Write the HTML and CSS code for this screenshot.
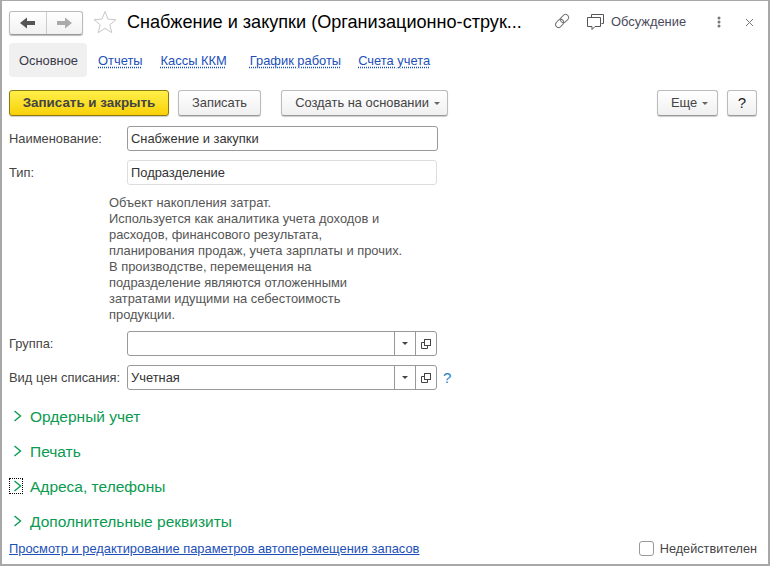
FILE: index.html
```html
<!DOCTYPE html>
<html lang="ru">
<head>
<meta charset="utf-8">
<title>Снабжение и закупки</title>
<link rel="stylesheet" href="styles.css">
</head>
<body>
<div class="window">
  <header class="head">
    <div class="nav">
      <button class="nav-btn"><svg width="16" height="12" viewBox="0 0 16 12"><path d="M0 6 7 .5V4h8v4H7v3.500z" fill="#555"/></svg></button>
      <button class="nav-btn"><svg width="16" height="12" viewBox="0 0 16 12"><path d="M16 6 9 .5V4H1v4h8v3.500z" fill="#aaa"/></svg></button>
    </div>
    <svg class="star" width="24" height="24" viewBox="0 0 24 24"><path d="M12 1.500l3 7.600 8 .6-6.200 5.100 2 7.900L12 18.400 5.200 22.700l2-7.900L1 9.700l8-.6z" fill="#fff" stroke="#c8c8c8"/></svg>
    <h1 class="title">Снабжение и закупки (Организационно-струк...</h1>
    <svg class="link-ic" width="18" height="18" viewBox="0 0 18 18" fill="none" stroke="#777"><rect x="-1.500" y="-3" width="9" height="6" rx="3" transform="translate(5.500 12.500) rotate(-45)"/><rect x="-7.500" y="-3" width="9" height="6" rx="3" transform="translate(12.500 5.500) rotate(-45) translate(3 0)"/></svg>
    <svg class="chat-ic" width="17" height="16" viewBox="0 0 17 16" fill="none" stroke="#555"><path d="M4.500 3.500V.5h12v9h-2"/><path d="M.5 3.500h13v9H8l-3 3v-3H.5z" fill="#fff"/></svg>
    <span class="discuss">Обсуждение</span>
    <svg class="dots" width="4" height="12" viewBox="0 0 4 12" fill="#777"><circle cx="2" cy="2" r="1.500"/><circle cx="2" cy="6" r="1.500"/><circle cx="2" cy="10" r="1.500"/></svg>
    <svg class="close" width="9" height="9" viewBox="0 0 9 9" stroke="#777"><path d="M1 1l7 7M8 1L1 8"/></svg>
  </header>

  <nav class="tabs">
    <span class="tab tab-active">Основное</span>
    <a class="tab tab-link tab-reports">Отчеты</a>
    <a class="tab tab-link tab-cash">Кассы ККМ</a>
    <a class="tab tab-link tab-schedule">График работы</a>
    <a class="tab tab-link">Счета учета</a>
  </nav>

  <div class="toolbar">
    <button class="btn btn-primary">Записать и закрыть</button>
    <button class="btn btn-save">Записать</button>
    <button class="btn btn-create">Создать на основании<i class="caret"></i></button>
    <span class="spacer"></span>
    <button class="btn btn-more">Еще<i class="caret"></i></button>
    <button class="btn btn-help">?</button>
  </div>

  <div class="row row-name">
    <label class="label">Наименование:</label>
    <div class="field">Снабжение и закупки</div>
  </div>
  <div class="row row-type">
    <label class="label">Тип:</label>
    <div class="field field-ro">Подразделение</div>
  </div>

  <p class="desc">Объект накопления затрат.<br>Используется как аналитика учета доходов и<br>расходов, финансового результата,<br>планирования продаж, учета зарплаты и прочих.<br>В производстве, перемещения на<br>подразделение являются отложенными<br>затратами идущими на себестоимость<br>продукции.</p>

  <div class="row row-group">
    <label class="label">Группа:</label>
    <div class="field field-select">
      <span class="value"></span>
      <span class="cell"><i class="caret caret-dark"></i></span>
      <span class="cell"><svg width="10" height="10" viewBox="0 0 10 10" fill="none" stroke="#444"><path d="M.5 3.500h2.500M.5 3.500v6h6V7"/><rect x="3.500" y=".5" width="6" height="6"/></svg></span>
    </div>
  </div>
  <div class="row row-price">
    <label class="label">Вид цен списания:</label>
    <div class="field field-select">
      <span class="value">Учетная</span>
      <span class="cell"><i class="caret caret-dark"></i></span>
      <span class="cell"><svg width="10" height="10" viewBox="0 0 10 10" fill="none" stroke="#444"><path d="M.5 3.500h2.500M.5 3.500v6h6V7"/><rect x="3.500" y=".5" width="6" height="6"/></svg></span>
    </div>
    <span class="hint">?</span>
  </div>

  <div class="sections">
    <div class="section"><span class="chev"><svg width="9" height="12" viewBox="0 0 9 12" fill="none" stroke="#0a9a50" stroke-width="1.400"><path d="M1.500 1l6 5-6 5"/></svg></span>Ордерный учет</div>
    <div class="section"><span class="chev"><svg width="9" height="12" viewBox="0 0 9 12" fill="none" stroke="#0a9a50" stroke-width="1.400"><path d="M1.500 1l6 5-6 5"/></svg></span>Печать</div>
    <div class="section"><span class="chev chev-focus"><svg width="9" height="12" viewBox="0 0 9 12" fill="none" stroke="#0a9a50" stroke-width="1.400"><path d="M1.500 1l6 5-6 5"/></svg></span>Адреса, телефоны</div>
    <div class="section"><span class="chev"><svg width="9" height="12" viewBox="0 0 9 12" fill="none" stroke="#0a9a50" stroke-width="1.400"><path d="M1.500 1l6 5-6 5"/></svg></span>Дополнительные реквизиты</div>
  </div>

  <footer class="foot">
    <a class="foot-link">Просмотр и редактирование параметров автоперемещения запасов</a>
    <label class="check"><span class="box"></span>Недействителен</label>
  </footer>
</div>
</body>
</html>
```
FILE: styles.css
```css
* { box-sizing: border-box; }
html, body { margin: 0; height: 100%; }
body { font: 12.9px/16px "Liberation Sans", Arial, sans-serif; color: #444; background: #fff; }
.window { width: 770px; height: 566px; border: 2px solid #a8a8a8; border-top-width: 1px; padding: 0 11px 0 7px; overflow: hidden; }
button { font: inherit; color: inherit; padding: 0; }

.head { height: 42px; display: flex; align-items: center; }
.nav { display: flex; width: 74px; height: 24px; margin-top: 1px; flex: none; border: 1px solid #bbb; border-bottom-color: #999; border-radius: 3px; background: linear-gradient(#fff, #f1f1f1); box-shadow: 0 1px 1px #bbb; }
.nav-btn { flex: 1; border: 0; background: none; display: flex; align-items: center; justify-content: center; }
.nav-btn + .nav-btn { border-left: 1px solid #ccc; }
.star { margin-left: 10px; flex: none; }
.title { margin: 0 0 0 10px; width: 410px; flex: none; font-size: 18.100px; line-height: 24px; font-weight: 400; color: #000; white-space: nowrap; overflow: hidden; }
.link-ic { margin-left: 15px; flex: none; }
.chat-ic { margin-left: 17px; flex: none; }
.discuss { margin-left: 7px; width: 75px; flex: none; color: #4a4a5a; white-space: nowrap; }
.dots { margin-left: 31px; flex: none; }
.close { margin-left: 24px; flex: none; }

.tabs { display: flex; height: 34px; }
.tab { display: flex; align-items: center; }
.tab-active { width: 78px; justify-content: center; background: #f0f0f0; border-radius: 4px; color: #3a3a4a; padding: 1px 0 0 1px; }
.tab-link { margin-left: 11px; margin-right: 9px; padding-top: 1px; color: #1c4fb8; text-decoration: underline dotted; text-underline-offset: 2px; }
.tab-reports { margin-right: 7px; }
.tab-cash { margin-right: 12px; }
.tab-schedule { margin-right: 6px; }

.toolbar { display: flex; height: 26px; margin-top: 13px; }
.btn { height: 26px; border: 1px solid #bbb; border-bottom-color: #999; border-radius: 3px; background: linear-gradient(#fff, #f0f0f0); box-shadow: 0 1px 1px #ccc; color: #444; display: flex; align-items: center; justify-content: center; }
.btn-primary { width: 160px; font-size: 13.400px; font-weight: 700; color: #444; border-color: #8c7a10; background: linear-gradient(#fff04a, #f8d008); }
.btn-save { width: 83px; margin-left: 9px; }
.btn-create { width: 167px; margin-left: 20px; padding-left: 6px; }
.btn-more { width: 61px; padding-left: 4px; }
.btn-help { width: 30px; margin-left: 9px; font-size: 15px; color: #222; }
.spacer { flex: 1; }
.caret { display: inline-block; margin-left: 5px; border: 3px solid transparent; border-top-color: #666; border-bottom-width: 0; }
.caret-dark { margin: 0; border-top-color: #444; }

.row { display: flex; align-items: center; height: 25px; }
.row-name { margin-top: 10px; }
.row-type { margin-top: 9px; }
.row-group { margin-top: 8px; }
.row-price { margin-top: 9px; }
.label { width: 118px; flex: none; white-space: nowrap; }
.field { width: 311px; height: 25px; border: 1px solid #999; border-radius: 3px; padding: 0 3px; display: flex; align-items: center; color: #333; }
.field-ro { width: 310px; border-color: #ddd; }
.field-select { width: 310px; padding: 0; }
.value { flex: 1; padding: 0 3px; }
.cell { width: 21px; height: 100%; border-left: 1px solid #999; display: flex; align-items: center; justify-content: center; }
.hint { margin-left: 6px; font-size: 15px; color: #1c84c8; }

.desc { margin: 10px 0 0 100px; line-height: 16px; color: #555; }

.sections { margin-top: 9px; }
.section { height: 35px; display: flex; align-items: center; font-size: 15.500px; color: #0a9a50; }
.chev { width: 14px; height: 16px; margin: 0 7px 2px 0; display: flex; align-items: center; justify-content: center; padding-left: 3px; border: 1px solid transparent; flex: none; }
.chev-focus { border: 1px dotted #000; }

.foot { display: flex; justify-content: space-between; align-items: center; height: 19px; }
.foot-link { color: #1c4fb8; text-decoration: underline; }
.check { display: flex; align-items: center; color: #444; font-size: 12.700px; }
.box { width: 15px; height: 15px; border: 1px solid #999; border-radius: 3px; margin-right: 6px; }
```
